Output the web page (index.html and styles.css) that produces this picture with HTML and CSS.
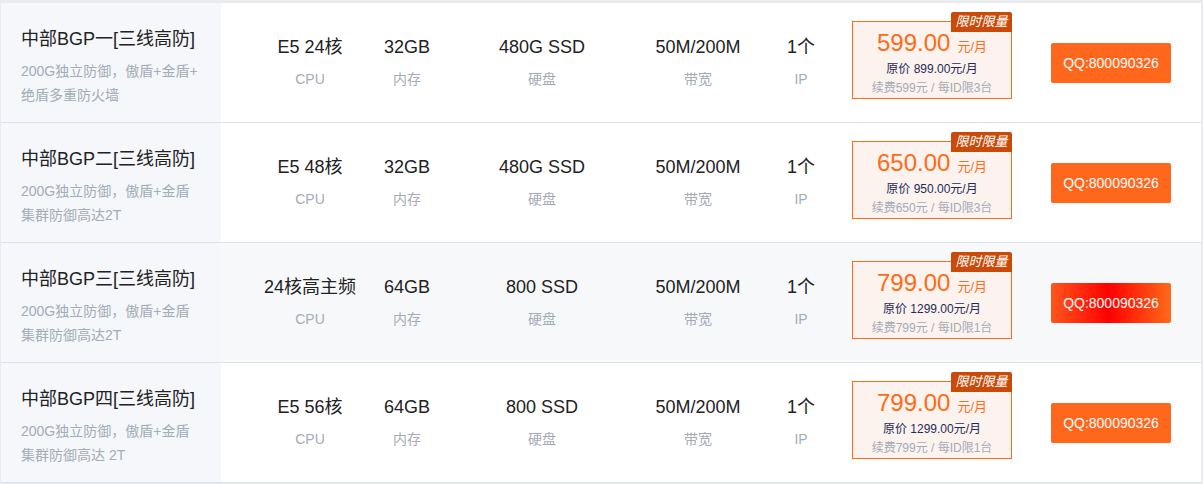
FILE: index.html
```html
<!DOCTYPE html>
<html lang="zh-CN">
<head>
<meta charset="utf-8">
<title>中部BGP</title>
<link rel="stylesheet" href="styles.css">
</head>
<body>
<div class="table">
  <div class="row">
    <div class="name">
      <div class="title">中部BGP一[三线高防]</div>
      <div class="desc">200G独立防御，傲盾+金盾+<br>绝盾多重防火墙</div>
    </div>
    <div class="cell c-cpu"><div class="val">E5 24核</div><div class="lbl">CPU</div></div>
    <div class="cell c-mem"><div class="val">32GB</div><div class="lbl">内存</div></div>
    <div class="cell c-disk"><div class="val">480G SSD</div><div class="lbl">硬盘</div></div>
    <div class="cell c-bw"><div class="val">50M/200M</div><div class="lbl">带宽</div></div>
    <div class="cell c-ip"><div class="val">1个</div><div class="lbl">IP</div></div>
    <div class="price">
      <span class="badge">限时限量</span>
      <div class="now"><span class="num">599.00</span><span class="unit">元/月</span></div>
      <div class="orig">原价 899.00元/月</div>
      <div class="renew">续费599元 / 每ID限3台</div>
    </div>
    <a class="btn">QQ:800090326</a>
  </div>
  <div class="row">
    <div class="name">
      <div class="title">中部BGP二[三线高防]</div>
      <div class="desc">200G独立防御，傲盾+金盾<br>集群防御高达2T</div>
    </div>
    <div class="cell c-cpu"><div class="val">E5 48核</div><div class="lbl">CPU</div></div>
    <div class="cell c-mem"><div class="val">32GB</div><div class="lbl">内存</div></div>
    <div class="cell c-disk"><div class="val">480G SSD</div><div class="lbl">硬盘</div></div>
    <div class="cell c-bw"><div class="val">50M/200M</div><div class="lbl">带宽</div></div>
    <div class="cell c-ip"><div class="val">1个</div><div class="lbl">IP</div></div>
    <div class="price">
      <span class="badge">限时限量</span>
      <div class="now"><span class="num">650.00</span><span class="unit">元/月</span></div>
      <div class="orig">原价 950.00元/月</div>
      <div class="renew">续费650元 / 每ID限3台</div>
    </div>
    <a class="btn">QQ:800090326</a>
  </div>
  <div class="row row-hover">
    <div class="name">
      <div class="title">中部BGP三[三线高防]</div>
      <div class="desc">200G独立防御，傲盾+金盾<br>集群防御高达2T</div>
    </div>
    <div class="cell c-cpu"><div class="val">24核高主频</div><div class="lbl">CPU</div></div>
    <div class="cell c-mem"><div class="val">64GB</div><div class="lbl">内存</div></div>
    <div class="cell c-disk"><div class="val">800 SSD</div><div class="lbl">硬盘</div></div>
    <div class="cell c-bw"><div class="val">50M/200M</div><div class="lbl">带宽</div></div>
    <div class="cell c-ip"><div class="val">1个</div><div class="lbl">IP</div></div>
    <div class="price">
      <span class="badge">限时限量</span>
      <div class="now"><span class="num">799.00</span><span class="unit">元/月</span></div>
      <div class="orig">原价 1299.00元/月</div>
      <div class="renew">续费799元 / 每ID限1台</div>
    </div>
    <a class="btn btn-hot">QQ:800090326</a>
  </div>
  <div class="row">
    <div class="name">
      <div class="title">中部BGP四[三线高防]</div>
      <div class="desc">200G独立防御，傲盾+金盾<br>集群防御高达 2T</div>
    </div>
    <div class="cell c-cpu"><div class="val">E5 56核</div><div class="lbl">CPU</div></div>
    <div class="cell c-mem"><div class="val">64GB</div><div class="lbl">内存</div></div>
    <div class="cell c-disk"><div class="val">800 SSD</div><div class="lbl">硬盘</div></div>
    <div class="cell c-bw"><div class="val">50M/200M</div><div class="lbl">带宽</div></div>
    <div class="cell c-ip"><div class="val">1个</div><div class="lbl">IP</div></div>
    <div class="price">
      <span class="badge">限时限量</span>
      <div class="now"><span class="num">799.00</span><span class="unit">元/月</span></div>
      <div class="orig">原价 1299.00元/月</div>
      <div class="renew">续费799元 / 每ID限1台</div>
    </div>
    <a class="btn">QQ:800090326</a>
  </div>
</div>
</body>
</html>
```

FILE: styles.css
```css
* { box-sizing: border-box; }
html, body { margin: 0; padding: 0; }
body {
  background: #e9ebef;
  font-family: "Liberation Sans", Arial, "Noto Sans CJK SC", sans-serif;
  color: #333;
  padding: 3px 0 0 1px;
}
.table {
  width: 1200px;
  background: #fff;
}
.row {
  display: flex;
  align-items: center;
  height: 120px;
  border-bottom: 1px solid #dde2ea;
  background: #fff;
}
.row-hover { background: #f7f8fa; }
.name {
  width: 220px;
  align-self: stretch;
  background: #f5f7fa;
  padding: 22px 0 0 20px;
}
.title {
  font-size: 18px;
  line-height: 28px;
  color: #222;
}
.desc {
  margin-top: 6px;
  font-size: 14px;
  line-height: 24px;
  color: #a4abb7;
}
.cell { text-align: center; }
.val { font-size: 18px; line-height: 24px; color: #222; }
.lbl { font-size: 14px; line-height: 24px; color: #a4abb7; margin-top: 8px; }
.c-cpu { margin-left: 29px; width: 120px; }
.c-mem { width: 74px; }
.c-disk { width: 196px; }
.c-bw { width: 116px; }
.c-ip { width: 90px; }
.price {
  position: relative;
  align-self: flex-start;
  margin-top: 18px;
  margin-left: 6px;
  width: 160px;
  height: 78px;
  border: 1px solid #ff6b16;
  background: #fcf2ee;
  text-align: center;
  padding-top: 8px;
}
.badge {
  position: absolute;
  right: -1px;
  top: -10px;
  width: 61px;
  height: 20px;
  line-height: 20px;
  background: #c94a09;
  color: #fff;
  font-size: 13px;
  font-style: italic;
  text-align: center;
  border-radius: 2px 2px 0 0;
}
.now { line-height: 26px; color: #ff6b16; }
.num { font-size: 24px; }
.unit { font-size: 13px; margin-left: 7px; }
.orig { font-size: 12px; line-height: 18px; color: #1f2b58; }
.renew { font-size: 12px; line-height: 20px; color: #a4abb7; }
.btn {
  margin-left: 39px;
  width: 120px;
  height: 40px;
  line-height: 40px;
  border-radius: 2px;
  background: #ff671d;
  color: #fff;
  font-size: 14px;
  text-align: center;
}
.btn-hot {
  background: linear-gradient(90deg, #ff561c 0%, #ff0000 48%, #ff6a1a 100%);
}
```
